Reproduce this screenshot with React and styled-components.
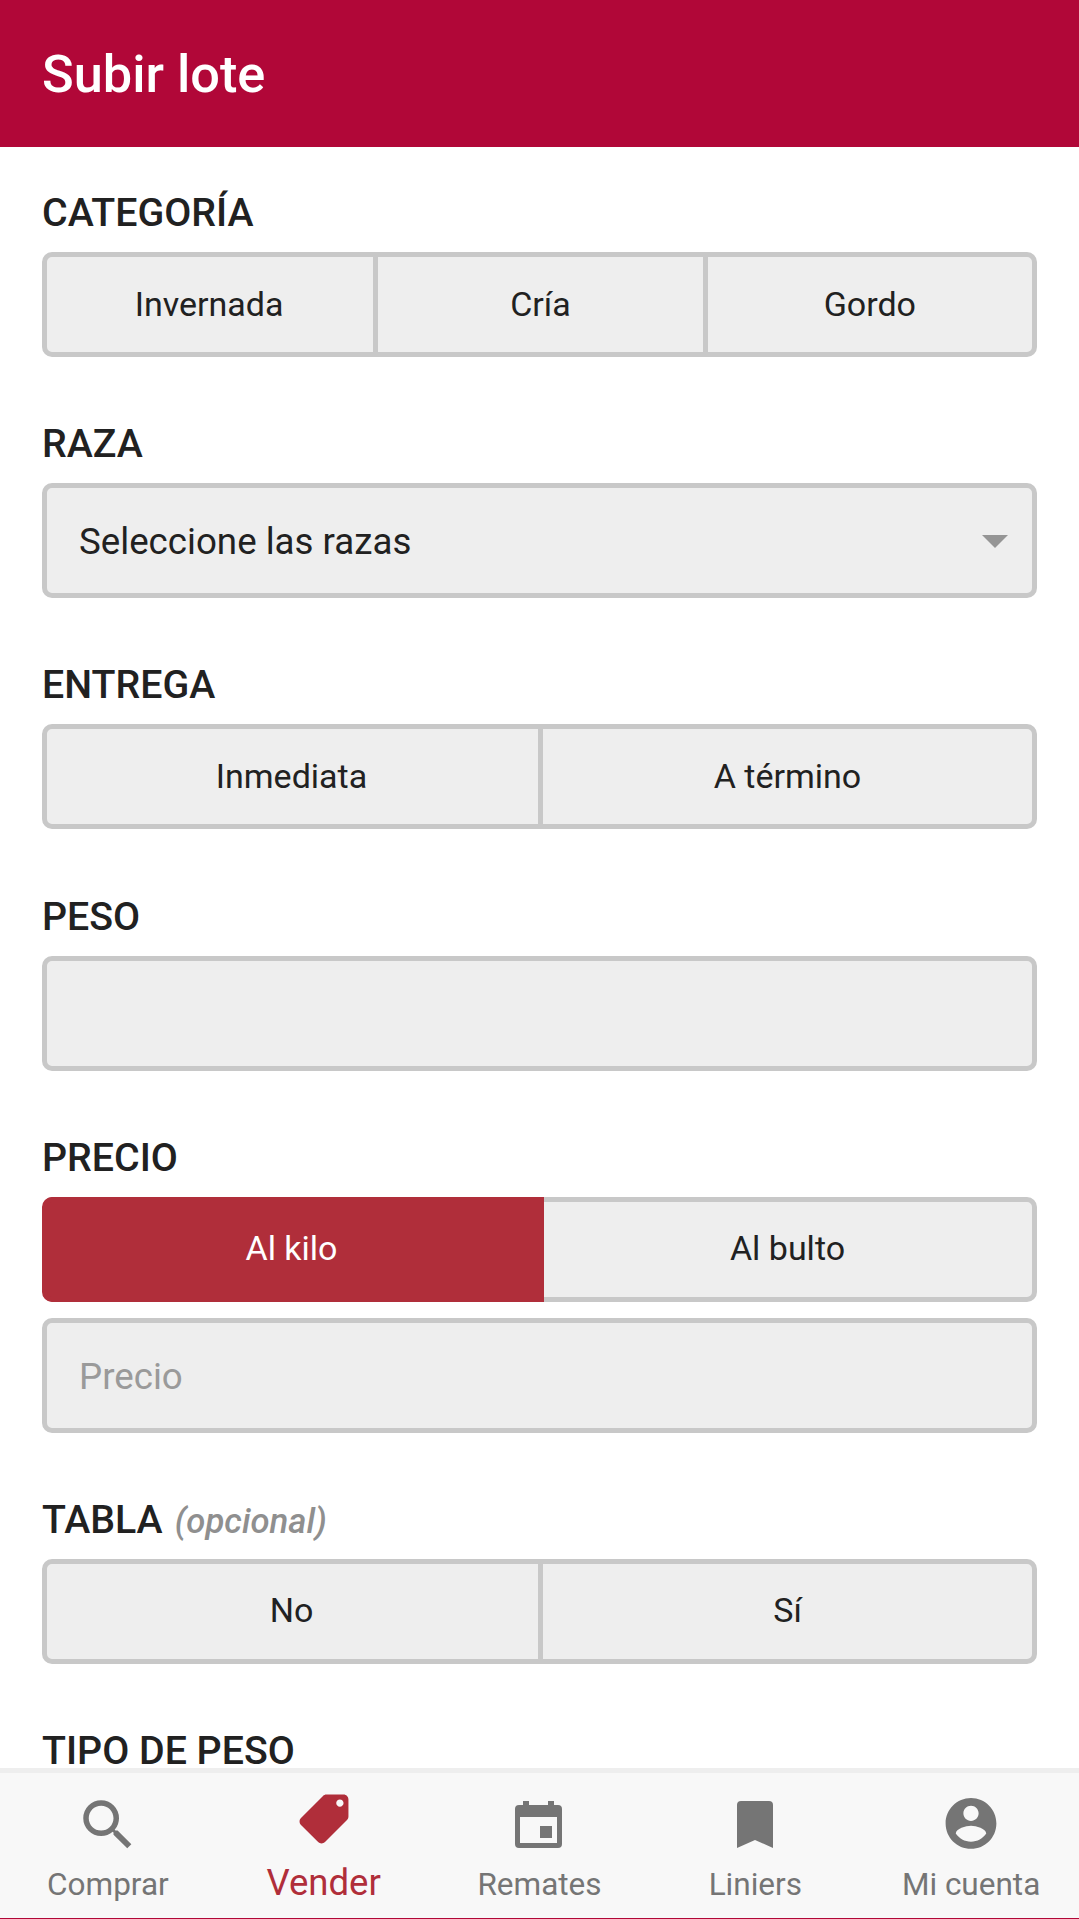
import React from "react";
import styled, { createGlobalStyle } from "styled-components";

const GlobalStyle = createGlobalStyle`
  html, body {
    margin: 0;
    padding: 0;
    background: #fff;
  }

  * {
    box-sizing: border-box;
  }
`;

const Screen = styled.div`
  display: flex;
  flex-direction: column;
  height: 1919px;
  overflow: hidden;
  font-family: Roboto, "Noto Sans", sans-serif;
  color: #212121;
  background: #fff;
`;

const Header = styled.header`
  flex: none;
  display: flex;
  align-items: center;
  height: 147px;
  padding-left: 42px;
  background: #b10738;
`;

const Title = styled.h1`
  margin: 0;
  font-size: 52.3px;
  font-weight: 500;
  color: #fff;
`;

const Content = styled.main`
  flex: 1;
  min-height: 0;
  overflow: hidden;
  padding: 43px 42px 0;
`;

const Section = styled.section`
  margin-bottom: 64.2px;
`;

const Label = styled.h2`
  margin: 0 0 18px;
  height: 44px;
  font-size: 39.3px;
  line-height: 46px;
  font-weight: 500;
  color: #212121;
`;

const Optional = styled.em`
  margin-left: 12px;
  font-size: 34.7px;
  font-weight: 500;
  color: #8f8f8f;
`;

const Segments = styled.div`
  display: flex;
  height: 105px;
`;

const Segment = styled.div`
  position: relative;
  flex: 1;
  display: flex;
  align-items: center;
  justify-content: center;
  margin-left: -5px;
  padding-bottom: 2px;
  font-size: 34px;
  background: ${({ $active }) => ($active ? "#b02e3a" : "#eeeeee")};
  color: ${({ $active }) => ($active ? "#fff" : "#212121")};
  border: 5px solid ${({ $active }) => ($active ? "#b02e3a" : "#c8c8c8")};
  box-shadow: ${({ $active }) => ($active ? "1px 0 0 #b02e3a" : "none")};
  z-index: ${({ $active }) => ($active ? 1 : 0)};

  &:first-child {
    margin-left: 0;
    padding-right: 2px;
    border-radius: 10px 0 0 10px;
  }

  &:last-child {
    border-radius: 0 10px 10px 0;
  }
`;

const Field = styled.div`
  display: flex;
  align-items: center;
  justify-content: space-between;
  height: 115px;
  margin-top: ${({ $spaced }) => ($spaced ? "16px" : "0")};
  padding: 2px 24px 0 32px;
  font-size: 36.7px;
  color: ${({ $placeholder }) => ($placeholder ? "#9a9a9a" : "#212121")};
  background: #eeeeee;
  border: 5px solid #c8c8c8;
  border-radius: 10px;
`;

const Caret = styled.span`
  width: 0;
  height: 0;
  border-left: 13px solid transparent;
  border-right: 13px solid transparent;
  border-top: 13px solid #959595;
`;

const Nav = styled.nav`
  flex: none;
  display: grid;
  grid-template-columns: repeat(5, 1fr);
  height: 151px;
  padding-top: 19px;
  background: #f8f8f8;
  border-top: 5px solid #eeeeee;
  border-bottom: 1px solid #b10738;
`;

const NavItem = styled.div`
  display: flex;
  flex-direction: column;
  align-items: center;
  color: ${({ $active }) => ($active ? "#b02e3a" : "#757575")};
`;

const NavIcon = styled.svg`
  display: block;
  width: 66px;
  height: 66px;
  fill: currentColor;
`;

const NavText = styled.span`
  margin-top: ${({ $active }) => ($active ? "5px" : "7px")};
  font-size: ${({ $active }) => ($active ? "36.5px" : "31.5px")};
  line-height: 40px;
`;

const categories = ["Invernada", "Cría", "Gordo"];

const SearchIcon = () => (
  <NavIcon viewBox="0 0 24 24">
    <path d="M15.5 14h-.79l-.28-.27A6.47 6.47 0 0 0 16 9.5 6.5 6.5 0 1 0 9.5 16c1.61 0 3.09-.59 4.23-1.57l.27.28v.79l5 4.99L20.49 19l-4.99-5zm-6 0C7.01 14 5 11.99 5 9.5S7.01 5 9.5 5 14 7.01 14 9.5 11.99 14 9.5 14z" />
  </NavIcon>
);

const TagIcon = () => (
  <NavIcon viewBox="-1.5 0.95 27 27">
    <path
      transform="translate(24 0) scale(-1 1)"
      d="M21.41 11.58l-9-9C12.05 2.22 11.55 2 11 2H4c-1.1 0-2 .9-2 2v7c0 .55.22 1.05.59 1.42l9 9c.36.36.86.58 1.41.58.55 0 1.05-.22 1.41-.59l7-7c.37-.36.59-.86.59-1.41 0-.55-.23-1.06-.59-1.42zM5.5 7C4.67 7 4 6.33 4 5.5S4.67 4 5.5 4 7 4.67 7 5.5 6.33 7 5.5 7z"
    />
  </NavIcon>
);

const CalendarIcon = () => (
  <NavIcon viewBox="0 0 66 66">
    <path
      fillRule="evenodd"
      d="M17 9h6v4h19V9h6v4h4a4 4 0 0 1 4 4v35a4 4 0 0 1-4 4H13a4 4 0 0 1-4-4V17a4 4 0 0 1 4-4h4zM14 25v26h37V25zM34 34h12v12H34z"
    />
  </NavIcon>
);

const BookmarkIcon = () => (
  <NavIcon viewBox="0 0 66 66">
    <path d="M19 9h28a4 4 0 0 1 4 4v43l-18-8-18 8V13a4 4 0 0 1 4-4z" />
  </NavIcon>
);

const AccountIcon = () => (
  <NavIcon viewBox="-1 -0.4 26 26">
    <path d="M12 2C6.48 2 2 6.48 2 12s4.48 10 10 10 10-4.48 10-10S17.52 2 12 2zm0 3c1.66 0 3 1.34 3 3s-1.34 3-3 3-3-1.34-3-3 1.34-3 3-3zm0 14.2c-2.5 0-4.71-1.28-6-3.22.03-1.99 4-3.08 6-3.08 1.99 0 5.97 1.09 6 3.08-1.29 1.94-3.5 3.22-6 3.22z" />
  </NavIcon>
);

const tabs = [
  { label: "Comprar", Icon: SearchIcon },
  { label: "Vender", Icon: TagIcon, active: true },
  { label: "Remates", Icon: CalendarIcon },
  { label: "Liniers", Icon: BookmarkIcon },
  { label: "Mi cuenta", Icon: AccountIcon },
];

const App = () => {
  return (
    <Screen>
      <GlobalStyle />
      <Header>
        <Title>Subir lote</Title>
      </Header>
      <Content>
        <Section>
          <Label>CATEGORÍA</Label>
          <Segments>
            {categories.map((item) => (
              <Segment key={item}>{item}</Segment>
            ))}
          </Segments>
        </Section>
        <Section>
          <Label>RAZA</Label>
          <Field>
            Seleccione las razas
            <Caret />
          </Field>
        </Section>
        <Section>
          <Label>ENTREGA</Label>
          <Segments>
            <Segment>Inmediata</Segment>
            <Segment>A término</Segment>
          </Segments>
        </Section>
        <Section>
          <Label>PESO</Label>
          <Field />
        </Section>
        <Section>
          <Label>PRECIO</Label>
          <Segments>
            <Segment $active>Al kilo</Segment>
            <Segment>Al bulto</Segment>
          </Segments>
          <Field $spaced $placeholder>
            Precio
          </Field>
        </Section>
        <Section>
          <Label>
            TABLA<Optional>(opcional)</Optional>
          </Label>
          <Segments>
            <Segment>No</Segment>
            <Segment>Sí</Segment>
          </Segments>
        </Section>
        <Section>
          <Label>TIPO DE PESO</Label>
        </Section>
      </Content>
      <Nav>
        {tabs.map(({ label, Icon, active }) => (
          <NavItem key={label} $active={active}>
            <Icon />
            <NavText $active={active}>{label}</NavText>
          </NavItem>
        ))}
      </Nav>
    </Screen>
  );
};

export default App;
